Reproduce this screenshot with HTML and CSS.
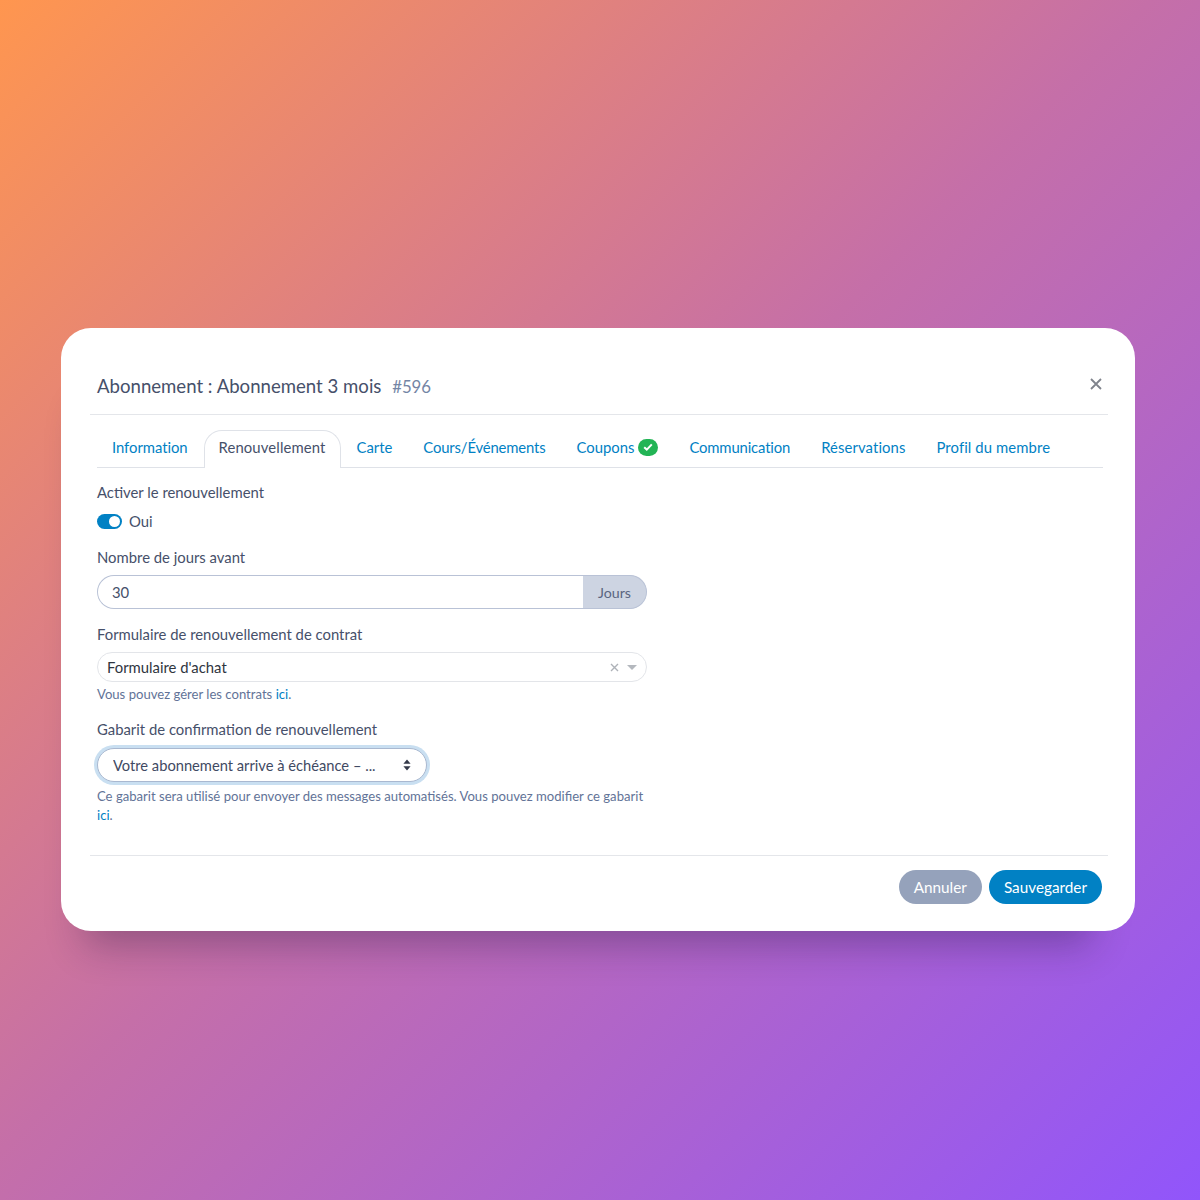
FILE: index.html
```html
<!DOCTYPE html>
<html>
<head>
  <title>Abonnement</title>
  <link rel="stylesheet" href="styles.css">
</head>
<body>
  <div class="modal">
    <div class="modal-header">
      <h1>Abonnement : Abonnement 3 mois <small>#596</small></h1>
      <svg class="close" width="12" height="12" viewBox="0 0 12 12"><path d="M1 1L11 11M11 1L1 11" stroke="#7f838c" stroke-width="1.8" fill="none"/></svg>
    </div>

    <div class="modal-body">
      <ul class="tabs">
        <li class="tab-info"><a href="#">Information</a></li>
        <li class="active"><a href="#">Renouvellement</a></li>
        <li><a href="#">Carte</a></li>
        <li class="tab-tight"><a href="#">Cours/Événements</a></li>
        <li><a href="#">Coupons
          <span class="badge"><svg width="10" height="8" viewBox="0 0 10 8"><path d="M1.2 4.2L3.8 6.6L8.8 1.4" stroke="#fff" stroke-width="2" fill="none"/></svg></span>
        </a></li>
        <li class="tab-tight"><a href="#">Communication</a></li>
        <li class="tab-wide"><a href="#">Réservations</a></li>
        <li class="tab-wide"><a href="#">Profil du membre</a></li>
      </ul>

      <div class="form-col">
        <div class="form-group group-switch">
          <label>Activer le renouvellement</label>
          <div class="switch-row">
            <span class="switch"><span class="knob"></span></span>
            <span>Oui</span>
          </div>
        </div>

        <div class="form-group group-days">
          <label for="days">Nombre de jours avant</label>
          <div class="input-group">
            <input type="text" id="days" value="30">
            <span class="addon">Jours</span>
          </div>
        </div>

        <div class="form-group group-contract">
          <label>Formulaire de renouvellement de contrat</label>
          <div class="select2">
            <span class="select2-text">Formulaire d'achat</span>
            <svg width="9" height="9" viewBox="0 0 9 9"><path d="M1 1L8 8M8 1L1 8" stroke="#aeb2b8" stroke-width="1.4" fill="none"/></svg>
            <svg width="10" height="5" viewBox="0 0 10 5"><path d="M0 0H10L5 5Z" fill="#b4b8be"/></svg>
          </div>
          <p class="help">Vous pouvez gérer les contrats <a href="#">ici</a>.</p>
        </div>

        <div class="form-group">
          <label for="template">Gabarit de confirmation de renouvellement</label>
          <div class="select-wrap">
            <select id="template">
              <option>Votre abonnement arrive à échéance – ...</option>
            </select>
            <svg class="select-arrows" width="8" height="12" viewBox="0 0 8 12"><path d="M4 0.5L7.6 4.8H0.4ZM4 11.5L0.4 7.2H7.6Z" fill="#343a4a"/></svg>
          </div>
          <p class="help help-long">Ce gabarit sera utilisé pour envoyer des messages automatisés. Vous pouvez modifier ce gabarit <a href="#">ici</a>.</p>
        </div>
      </div>
    </div>

    <div class="modal-footer">
      <button class="btn btn-cancel">Annuler</button>
      <button class="btn btn-save">Sauvegarder</button>
    </div>
  </div>
</body>
</html>
```

FILE: styles.css
```css
* {
  box-sizing: border-box;
}
html,
body {
  height: 1200px;
}
body {
  margin: 0;
  padding: 328px 65px 0 61px;
  overflow: hidden;
  background: linear-gradient(135deg, #ff964f 0%, #c56fa8 48%, #9155fb 100%);
  font-family: Lato, "Noto Sans", sans-serif;
  font-size: 14.85px;
  color: #46506a;
}
.modal {
  height: 603px;
  padding: 0 27px 0 29px;
  background: #fff;
  border-radius: 30px;
  box-shadow: -10px 48px 36px -34px rgba(30, 20, 60, 0.32);
}
.modal-header {
  height: 87px;
  padding: 25px 6px 0 7px;
  display: flex;
  align-items: center;
  justify-content: space-between;
  border-bottom: 1px solid #e4e6ea;
}
.modal-header h1 {
  margin: 4px 0 0;
  font-size: 18.6px;
  font-weight: 400;
  color: #46506a;
}
.modal-header small {
  margin-left: 6px;
  font-size: 16.8px;
  font-weight: 400;
  color: #7485a5;
}
.modal-body {
  padding: 15px 5px 0 7px;
  height: 441px;
  border-bottom: 1px solid #e4e6ea;
}
.tabs {
  margin: 0;
  padding: 0;
  height: 38px;
  list-style: none;
  display: flex;
  border-bottom: 1px solid #dfe2e8;
}
.tabs li {
  height: 38px;
  margin-right: 1px;
}
.tabs a {
  display: flex;
  align-items: center;
  gap: 4px;
  height: 38px;
  padding: 0 14px 5px;
  color: #0181c4;
  text-decoration: none;
  border: 1px solid transparent;
  border-bottom: 0;
  border-radius: 18px 18px 0 0;
  white-space: nowrap;
}
.tabs .tab-info a {
  letter-spacing: -0.05px;
}
.tabs .tab-tight a {
  letter-spacing: -0.15px;
}
.tabs .tab-wide a {
  letter-spacing: 0.1px;
}
.tabs .active a {
  background: #fff;
  color: #46506a;
  letter-spacing: 0.12px;
  border-color: #dfe2e8;
}
.badge {
  display: inline-flex;
  align-items: center;
  justify-content: center;
  width: 20px;
  height: 17px;
  border-radius: 9px;
  background: #22b455;
}
.form-col {
  width: 550px;
}
.form-group label {
  display: block;
  line-height: 20px;
}
.group-switch {
  padding-top: 14px;
}
.switch-row {
  display: flex;
  align-items: center;
  gap: 7px;
  margin-top: 9px;
  height: 20px;
}
.switch {
  display: flex;
  align-items: center;
  justify-content: flex-end;
  width: 25px;
  height: 15px;
  padding-right: 2px;
  border-radius: 8px;
  background: #0181c4;
}
.knob {
  width: 11px;
  height: 11px;
  border-radius: 50%;
  background: #fff;
}
.group-days {
  margin-top: 16px;
}
.input-group {
  display: flex;
  height: 34px;
  margin-top: 8px;
}
.input-group input {
  flex: 1;
  min-width: 0;
  padding: 0 14px;
  border: 1px solid #b9c2d6;
  border-right: 0;
  border-radius: 17px 0 0 17px;
  font: inherit;
  color: #46506a;
  outline: none;
}
.addon {
  display: flex;
  align-items: center;
  padding: 0 15px;
  background: #cdd4e2;
  border: 1px solid #b9c2d6;
  border-left: 0;
  border-radius: 0 17px 17px 0;
  font-size: 14.2px;
  color: #5a6580;
}
.group-contract {
  margin-top: 15px;
}
.select2 {
  display: flex;
  align-items: center;
  gap: 8px;
  height: 30px;
  margin-top: 8px;
  padding: 0 9px;
  border: 1px solid #e3e5e9;
  border-radius: 15px;
  color: #2f3540;
}
.select2-text {
  flex: 1;
}
.help {
  margin: 3px 0 0;
  font-size: 13.1px;
  line-height: 19px;
  color: #627397;
}
.help a {
  color: #0181c4;
  text-decoration: none;
}
.form-group:last-child {
  margin-top: 15px;
}
.select-wrap {
  position: relative;
  width: 330px;
  margin-top: 9px;
}
.select-wrap select {
  display: block;
  width: 100%;
  height: 34px;
  padding: 0 30px 0 15px;
  appearance: none;
  background: #fff;
  border: 1px solid #a9b8d0;
  border-radius: 17px;
  box-shadow: 0 0 0 3px #c9dff1;
  font: inherit;
  font-size: 14.7px;
  color: #3f4a63;
  outline: none;
}
.select-arrows {
  position: absolute;
  right: 16px;
  top: 11px;
}
.help-long {
  margin-top: 5px;
}
.modal-footer {
  display: flex;
  justify-content: flex-end;
  gap: 7px;
  padding: 14px 6px 0 0;
}
.btn {
  height: 34px;
  padding: 0 15px 1px;
  border: 0;
  border-radius: 17px;
  font: inherit;
  font-size: 15.3px;
  color: #fff;
}
.btn-cancel {
  background: #95a2bb;
}
.btn-save {
  background: #0181c4;
}
```
